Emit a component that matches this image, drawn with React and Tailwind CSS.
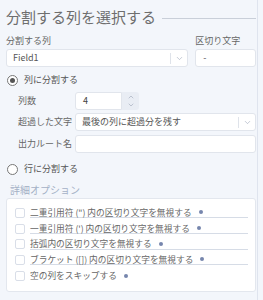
import { ChevronDown, ChevronUp } from "lucide-react";

const font = { fontFamily: '"Noto Sans CJK JP", "Noto Sans", sans-serif' };

function Option({ label, line = true }) {
  return (
    <div className="flex items-center h-[15.7px]">
      <div className="w-[10px] h-[10px] border border-[#d9dee8] rounded-[2px] bg-white shrink-0" />
      <div
        className={
          "ml-[5px] w-[218px] h-[11px] flex items-center text-[8.7px] leading-[11px] text-[#666] " +
          (line ? "border-b border-[#d6dce6]" : "")
        }
      >
        <span className="whitespace-nowrap">{label}</span>
        <span className="ml-[7px] w-[4px] h-[4px] rounded-full bg-[#7686ad] shrink-0" />
      </div>
    </div>
  );
}

function Radio({ label, checked }) {
  return (
    <div className="flex items-center h-[12px]">
      <div className="w-[11px] h-[11px] rounded-full border border-[#777] bg-white flex items-center justify-center">
        {checked && <div className="w-[5px] h-[5px] rounded-full bg-[#555]" />}
      </div>
      <span className="ml-[6px] text-[9px] text-[#555] leading-[12px]">{label}</span>
    </div>
  );
}

export default function App() {
  return (
    <div className="w-[263px] h-[300px] bg-[#f3f6fb] overflow-hidden" style={font}>
      <div className="w-[258px] h-[300px] border-r border-[#dfe4ee] pl-[6px] pr-[1px]">
        <div className="flex items-center pt-[7px] h-[27px]">
          <span className="text-[15px] leading-[18px] text-[#6e6e6e] whitespace-nowrap">分割する列を選択する</span>
          <div className="ml-[6px] flex-1 h-px bg-[#c9cfd9] mt-[2px]" />
        </div>

        <div className="flex mt-[8px] gap-[7px]">
          <div className="w-[183px]">
            <div className="text-[9px] leading-[12px] text-[#666] h-[14px]">分割する列</div>
            <div className="h-[18px] bg-white border border-[#e1e5ec] rounded-[3px] flex items-center">
              <span className="flex-1 pl-[6px] text-[9px] text-[#555]">Field1</span>
              <div className="w-px h-[11px] bg-[#dfe3ea]" />
              <div className="w-[16px] flex justify-center">
                <ChevronDown size={9} strokeWidth={1.5} color="#9aa3b5" />
              </div>
            </div>
          </div>
          <div className="w-[61px]">
            <div className="text-[9px] leading-[12px] text-[#666] h-[14px]">区切り文字</div>
            <div className="h-[18px] bg-white border border-[#e1e5ec] rounded-[3px] flex items-center pl-[7px] text-[9px] text-[#555]">
              -
            </div>
          </div>
        </div>

        <div className="mt-[7px] ml-[1px]">
          <Radio label="列に分割する" checked />
        </div>

        <div className="mt-[6px] flex flex-col gap-[3px]">
          <div className="flex items-center">
            <span className="w-[69px] pl-[12px] text-[9px] text-[#666]">列数</span>
            <div className="flex h-[18px]">
              <div className="w-[47px] bg-white border border-[#e1e5ec] rounded-l-[3px] flex items-center pl-[7px] text-[9px] text-[#444]">
                4
              </div>
              <div className="w-[17px] bg-[#e9edf4] rounded-r-[3px] flex flex-col items-center justify-center">
                <ChevronUp size={8} strokeWidth={1.5} color="#8d97ab" />
                <ChevronDown size={8} strokeWidth={1.5} color="#8d97ab" />
              </div>
            </div>
          </div>
          <div className="flex items-center">
            <span className="w-[69px] pl-[12px] text-[9px] text-[#666] whitespace-nowrap">超過した文字</span>
            <div className="w-[181px] h-[18px] bg-white border border-[#e1e5ec] rounded-[3px] flex items-center">
              <span className="flex-1 pl-[6px] text-[9px] text-[#555]">最後の列に超過分を残す</span>
              <div className="w-px h-[11px] bg-[#dfe3ea]" />
              <div className="w-[16px] flex justify-center">
                <ChevronDown size={9} strokeWidth={1.5} color="#9aa3b5" />
              </div>
            </div>
          </div>
          <div className="flex items-center mt-[1px]">
            <span className="w-[69px] pl-[12px] text-[9px] text-[#666] whitespace-nowrap">出力ルート名</span>
            <div className="w-[181px] h-[18px] bg-white border border-[#e1e5ec] rounded-[3px]" />
          </div>
        </div>

        <div className="mt-[10px] ml-[1px]">
          <Radio label="行に分割する" />
        </div>

        <div className="mt-[8px] ml-[4px] text-[10px] leading-[13px] text-[#a4b1c6]">詳細オプション</div>

        <div className="mt-[2px] w-[250px] h-[94px] bg-white border border-[#e3e7ee] rounded-[3px] pl-[8px] pt-[6px]">
          <Option label={'二重引用符 (") 内の区切り文字を無視する'} />
          <Option label={"一重引用符 (') 内の区切り文字を無視する"} />
          <Option label="括弧内の区切り文字を無視する" />
          <Option label="ブラケット ([]) 内の区切り文字を無視する" />
          <Option label="空の列をスキップする" line={false} />
        </div>
      </div>
    </div>
  );
}
